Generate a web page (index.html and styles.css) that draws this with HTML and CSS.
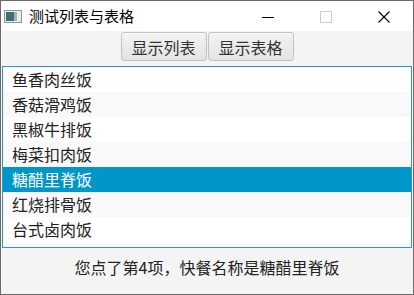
FILE: index.html
```html
<!DOCTYPE html>
<html lang="zh">
<head>
<meta charset="utf-8">
<title>测试列表与表格</title>
<link rel="stylesheet" href="styles.css">
</head>
<body>
<div class="window">
  <div class="titlebar">
    <svg class="app-icon" width="18" height="13" viewBox="0 0 18 13">
      <rect x="0.5" y="0.5" width="17" height="12" fill="#e8eceb" stroke="#8a9a99"/>
      <rect x="2" y="2" width="8" height="9" fill="#3f6f74"/>
      <rect x="10" y="2" width="3" height="9" fill="#9fb7b7"/>
    </svg>
    <span class="title">测试列表与表格</span>
    <div class="controls">
      <div class="ctl"><svg width="12" height="12" viewBox="0 0 12 12"><line x1="0" y1="6.5" x2="12" y2="6.5" stroke="#000" stroke-width="1"/></svg></div>
      <div class="ctl"><svg width="12" height="12" viewBox="0 0 12 12"><rect x="0.5" y="0.5" width="11" height="11" fill="none" stroke="#cccccc" stroke-width="1"/></svg></div>
      <div class="ctl"><svg width="12" height="12" viewBox="0 0 12 12"><path d="M0.5 0.5 L11.5 11.5 M11.5 0.5 L0.5 11.5" stroke="#000" stroke-width="1.1" fill="none"/></svg></div>
    </div>
  </div>
  <div class="content">
    <div class="toolbar">
      <button class="btn">显示列表</button>
      <button class="btn">显示表格</button>
    </div>
    <ul class="list">
      <li class="cell">鱼香肉丝饭</li>
      <li class="cell alt">香菇滑鸡饭</li>
      <li class="cell">黑椒牛排饭</li>
      <li class="cell alt">梅菜扣肉饭</li>
      <li class="cell selected">糖醋里脊饭</li>
      <li class="cell alt">红烧排骨饭</li>
      <li class="cell">台式卤肉饭</li>
      <li class="cell alt empty"></li>
    </ul>
    <div class="status">您点了第4项，快餐名称是糖醋里脊饭</div>
  </div>
</div>
</body>
</html>
```

FILE: styles.css
```css
* { box-sizing: border-box; }
html, body {
  margin: 0;
  padding: 0;
  background: #ffffff;
}
body {
  font-family: "Noto Sans CJK SC", "Noto Sans", sans-serif;
  color: #1a1a1a;
}
.window {
  width: 414px;
  height: 295px;
  border: 1px solid #6a6a6a;
  display: flex;
  flex-direction: column;
  background: #f4f4f4;
}
.titlebar {
  height: 30px;
  background: #ffffff;
  display: flex;
  align-items: center;
  flex: none;
}
.app-icon {
  margin-left: 3px;
  margin-top: 1px;
  flex: none;
}
.title {
  margin-left: 7px;
  font-size: 15px;
  line-height: 20px;
  color: #000;
}
.controls {
  margin-left: auto;
  display: flex;
  height: 100%;
}
.ctl {
  width: 58px;
  height: 100%;
  display: flex;
  align-items: center;
  justify-content: center;
}
.ctl svg { margin-top: 1px; }
.content {
  flex: 1;
  display: flex;
  flex-direction: column;
}
.toolbar {
  display: flex;
  justify-content: center;
  gap: 1px;
  padding-top: 1px;
}
.btn {
  width: 86px;
  height: 29px;
  font-family: inherit;
  font-size: 16px;
  line-height: 20px;
  color: #333;
  padding: 0;
  border: 1px solid #c2c2c2;
  border-radius: 3px;
  background: linear-gradient(#f3f3f3, #e3e3e3);
  box-shadow: inset 0 1px 0 #fbfbfb;
}
.list {
  list-style: none;
  margin: 5px 1px 0 1px;
  padding: 0;
  height: 182px;
  border: 1px solid #2a9ab8;
  background: #ffffff;
  overflow: hidden;
}
.cell {
  height: 25px;
  line-height: 25px;
  padding-left: 9px;
  font-size: 16px;
  color: #222;
  background: #ffffff;
}
.cell.alt { background: #f9f9f9; }
.cell.selected {
  background: #0096c9;
  color: #ffffff;
}
.status {
  text-align: center;
  font-size: 16px;
  line-height: 20px;
  margin-top: 9px;
  color: #222;
}
```
